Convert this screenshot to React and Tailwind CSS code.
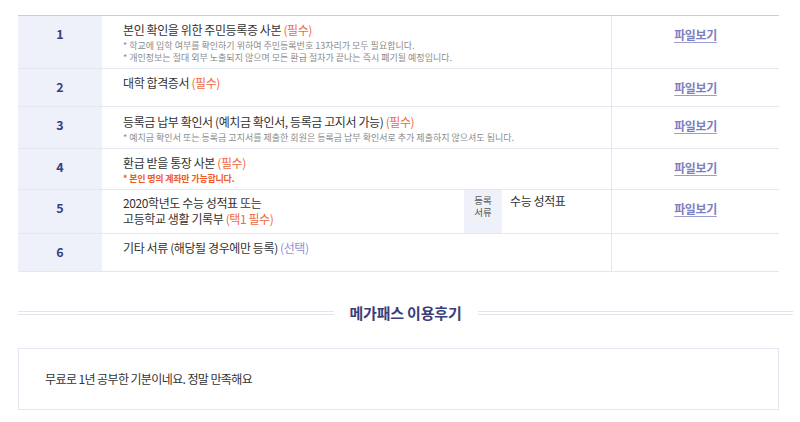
export default function App() {
  const Num = ({ n }) => (
    <div className="w-[84px] shrink-0 bg-[#eef0fa] pt-[9px] text-center text-[12.5px] font-bold leading-[18px] text-[#3c3f7e]">
      {n}
    </div>
  );
  const LinkCell = ({ show = true }) => (
    <div className="w-[168px] shrink-0 border-l border-[#e5e6f2] pt-[10px] text-center text-[12px] leading-[18px]">
      {show ? (
        <a className="font-bold tracking-[-0.4px] text-[#7c80c2] underline underline-offset-2 decoration-[#9a9dd0]">
          파일보기
        </a>
      ) : null}
    </div>
  );
  const req = <span className="text-[#f26a3d]">(필수)</span>;
  const title = "text-[12px] leading-[18px] tracking-[-0.4px]";
  const note = "mt-[1px] text-[9px] leading-[12px] tracking-[0px] text-[#8c8c8c]";
  return (
    <div className="w-[800px] h-[422px] overflow-hidden bg-white font-['Noto_Sans_CJK_KR',sans-serif] text-[#333]">
      <div className="pt-[15px] pl-[18px]">
        <div className="w-[761px] border-t border-[#c9cbe6]">
          {/* Row 1 */}
          <div className="flex border-b border-[#e5e6f2]">
            <Num n="1" />
            <div className="flex-1 min-h-[37px] pl-[21px] pt-[5px] pb-[4px]">
              <div className={title}>본인 확인을 위한 주민등록증 사본 {req}</div>
              <div className={note}>
                <div>* 학교에 입학 여부를 확인하기 위하여 주민등록번호 13자리가 모두 필요합니다.</div>
                <div>* 개인정보는 절대 외부 노출되지 않으며 모든 환급 절차가 끝나는 즉시 폐기될 예정입니다.</div>
              </div>
            </div>
            <LinkCell />
          </div>
          {/* Row 2 */}
          <div className="flex border-b border-[#e5e6f2]">
            <Num n="2" />
            <div className="flex-1 min-h-[37px] pl-[21px] pt-[5px] pb-[4px]">
              <div className={title}>대학 합격증서 {req}</div>
            </div>
            <LinkCell />
          </div>
          {/* Row 3 */}
          <div className="flex border-b border-[#e5e6f2]">
            <Num n="3" />
            <div className="flex-1 min-h-[37px] pl-[21px] pt-[6px] pb-[4px]">
              <div className={title}>
                등록금 납부 확인서 (예치금 확인서, 등록금 고지서 가능) {req}
              </div>
              <div className={note}>
                * 예치금 확인서 또는 등록금 고지서를 제출한 회원은 등록금 납부 확인서로 추가 제출하지 않으셔도 됩니다.
              </div>
            </div>
            <LinkCell />
          </div>
          {/* Row 4 */}
          <div className="flex border-b border-[#e5e6f2]">
            <Num n="4" />
            <div className="flex-1 min-h-[37px] pl-[21px] pt-[5px] pb-[4px]">
              <div className={title}>환급 받을 통장 사본 {req}</div>
              <div className="mt-[1px] text-[9px] font-bold leading-[12px] tracking-[-0.2px] text-[#f05a28]">
                * 본인 명의 계좌만 가능합니다.
              </div>
            </div>
            <LinkCell />
          </div>
          {/* Row 5 */}
          <div className="flex border-b border-[#e5e6f2]">
            <Num n="5" />
            <div className="flex flex-1 min-h-[43px]">
              <div className="flex-1 pl-[21px] pt-[5px] text-[12px] leading-[16px] tracking-[-0.4px]">
                <div>2020학년도 수능 성적표 또는</div>
                <div>
                  고등학교 생활 기록부 <span className="text-[#f26a3d]">(택1 필수)</span>
                </div>
              </div>
              <div className="w-[38px] shrink-0 bg-[#eef0fa] pt-[4px] text-center text-[9.5px] leading-[12px] text-[#555]">
                <div>등록</div>
                <div>서류</div>
              </div>
              <div className="w-[109px] shrink-0 pl-[8px] pt-[2px] text-[12px] leading-[18px] tracking-[-0.4px]">
                수능 성적표
              </div>
            </div>
            <LinkCell />
          </div>
          {/* Row 6 */}
          <div className="flex border-b border-[#e5e6f2]">
            <Num n="6" />
            <div className="flex-1 min-h-[37px] pl-[21px] pt-[5px] pb-[4px]">
              <div className={title}>
                기타 서류 (해당될 경우에만 등록) <span className="text-[#8f93d2]">(선택)</span>
              </div>
            </div>
            <LinkCell show={false} />
          </div>
        </div>

        {/* Heading */}
        <div className="mt-[31px] flex w-[775px] items-center gap-[16px]">
          <div className="h-[4px] flex-1 border-y border-[#e1e3ef]" />
          <div className="text-[15px] font-bold leading-[20px] tracking-[-0.2px] text-[#3b3e78]">
            메가패스 이용후기
          </div>
          <div className="h-[4px] flex-1 border-y border-[#e1e3ef]" />
        </div>

        {/* Review box */}
        <div className="mt-[25px] flex h-[62px] w-[761px] items-center border border-[#e5e6ef] pl-[26px]">
          <div className="text-[12px] leading-[18px] tracking-[-0.6px] text-[#333]">
            무료로 1년 공부한 기분이네요. 정말 만족해요
          </div>
        </div>
      </div>
    </div>
  );
}
